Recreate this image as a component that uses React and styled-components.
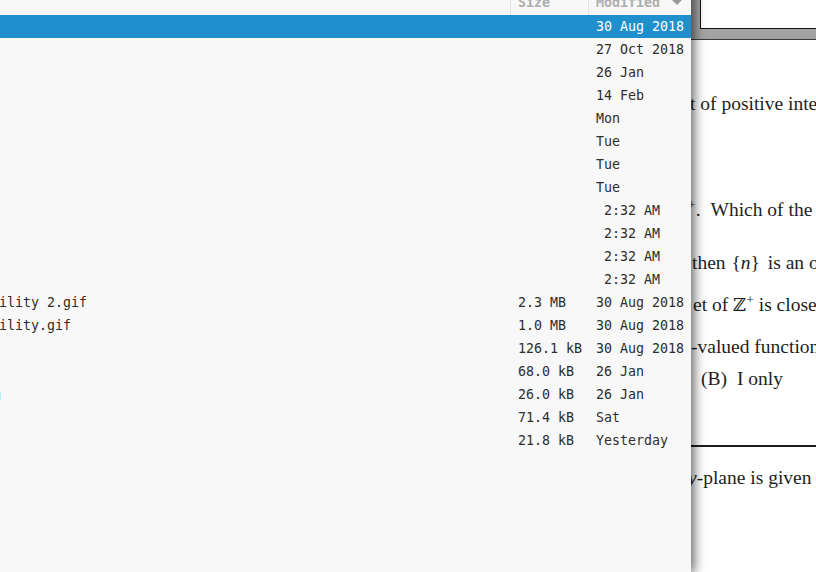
import React from 'react'
import styled, { createGlobalStyle } from 'styled-components'

const GlobalStyle = createGlobalStyle`
  *, *::before, *::after { box-sizing:border-box; }
  html, body { margin:0; padding:0; background:#fff; }
  body { width:816px; height:572px; overflow:hidden; }
`

const Screen = styled.div`
  position:relative;
  width:816px;
  height:572px;
  overflow:hidden;
  background:#fff;
`

/* pdf viewer behind the file window */
const Viewer = styled.div`
  display:flex;
  flex-direction:column;
  height:100%;
`

const TopBand = styled.div`
  flex-shrink:0;
  height:40px;
  padding-left:700px;
  background:#a3a3a3;
  border-bottom:1px solid #3a3a3a;
`

const PrevPage = styled.div`
  height:29px;
  background:#fff;
  border-left:1px solid #111;
  border-bottom:1px solid #111;
`

const Page = styled.div`
  flex:1;
  background:#fff;
  color:#1e1e1e;
  font-family:"Liberation Serif","DejaVu Serif",serif;
  font-size:19.5px;
`

const Line = styled.div`
  margin-top:${({$gap})=>$gap}px;
  padding-left:${({$x})=>$x}px;
  height:26px;
  line-height:26px;
  white-space:nowrap;
`

const Sup = styled.span`
  font-size:13.5px;
  line-height:0;
  vertical-align:7px;
`

const Spaced = styled.span`
  margin-left:${({$gap})=>$gap}px;
`

const Double = styled.span`
  font-family:"DejaVu Serif",serif;
  font-size:18px;
`

const Rule = styled.div`
  margin-top:${({$gap})=>$gap}px;
  margin-left:300px;
  height:2px;
  background:#1c1c1c;
`

/* file manager window */
const FileWindow = styled.div`
  position:absolute;
  top:-14px;
  left:-200px;
  width:891px;
  height:586px;
  background:#f8f8f8;
  box-shadow:2px 0 11px 1px rgba(0,0,0,0.62);
  font-family:"DejaVu Sans Mono","Liberation Mono",monospace;
  font-size:13.3px;
  color:#2e2e2e;
`

const Header = styled.div`
  display:grid;
  grid-template-columns:710px 78px 103px;
  height:29px;
`

const HeadCell = styled.div`
  display:flex;
  align-items:center;
  justify-content:space-between;
  padding:4px 9px 0 ${({$sep})=>$sep ? 7 : 135}px;
  line-height:25px;
  font-weight:bold;
  color:#adadad;
  border-left:${({$sep})=>$sep ? '1px solid #e4e4e4' : 'none'};
`

const SortArrow = styled.span`
  width:0;
  height:0;
  border-left:5px solid transparent;
  border-right:5px solid transparent;
  border-top:5px solid #9a9a9a;
`

const Row = styled.div`
  display:grid;
  grid-template-columns:710px 78px 103px;
  height:23px;
  line-height:23px;
  background:${({$selected})=>$selected ? '#1f8fcd' : 'transparent'};
  color:${({$selected})=>$selected ? '#fff' : '#2e2e2e'};
`

const NameCell = styled.div`
  display:flex;
  align-items:center;
  gap:8px;
  padding-left:${({$indent})=>111 + $indent}px;
  white-space:pre;
  overflow:hidden;
`

const Cell = styled.div`
  padding-left:8px;
  white-space:pre;
  overflow:hidden;
`

const FileIcon = ({kind}) => {
  if (kind === 'folder') {
    return (
      <svg width="16" height="16" viewBox="0 0 16 16">
        <path d="M1 3h5l1.5 1.5H15V13H1z" fill="#7a9cc6"/>
      </svg>
    )
  }
  if (kind === 'sheet') {
    return (
      <svg width="16" height="16" viewBox="0 0 16 16">
        <rect x="3" y="5" width="13" height="8" fill="#aef2f2"/>
      </svg>
    )
  }
  return (
    <svg width="16" height="16" viewBox="0 0 16 16">
      <path d="M3 1h7l3 3v11H3z" fill="#dcdcdc"/>
    </svg>
  )
}

const files = [
  { name:'Desktop', size:'', modified:'30 Aug 2018', kind:'folder', selected:true },
  { name:'Music', size:'', modified:'27 Oct 2018', kind:'folder' },
  { name:'Videos', size:'', modified:'26 Jan', kind:'folder' },
  { name:'Public', size:'', modified:'14 Feb', kind:'folder' },
  { name:'Photos', size:'', modified:'Mon', kind:'folder' },
  { name:'Notes', size:'', modified:'Tue', kind:'folder' },
  { name:'Books', size:'', modified:'Tue', kind:'folder' },
  { name:'Games', size:'', modified:'Tue', kind:'folder' },
  { name:'Code', size:'', modified:' 2:32 AM', kind:'folder' },
  { name:'Backup', size:'', modified:' 2:32 AM', kind:'folder' },
  { name:'Mail', size:'', modified:' 2:32 AM', kind:'folder' },
  { name:'Scans', size:'', modified:' 2:32 AM', kind:'folder' },
  { name:'Accessibility 2.gif', size:'2.3 MB', modified:'30 Aug 2018', kind:'file' },
  { name:'Accessibility.gif', size:'1.0 MB', modified:'30 Aug 2018', kind:'file' },
  { name:'cv.pdf', size:'126.1 kB', modified:'30 Aug 2018', kind:'file' },
  { name:'map.png', size:'68.0 kB', modified:'26 Jan', kind:'file' },
  { name:'', size:'26.0 kB', modified:'26 Jan', kind:'sheet', indent:74 },
  { name:'doc.odt', size:'71.4 kB', modified:'Sat', kind:'file' },
  { name:'todo.md', size:'21.8 kB', modified:'Yesterday', kind:'file' },
]

const App = () => {
  return (
    <Screen>
      <GlobalStyle/>
      <Viewer>
        <TopBand>
          <PrevPage/>
        </TopBand>
        <Page>
          <Line $gap={51} $x={690}>t of positive integers.</Line>
          <Line $gap={80} $x={688}>
            <Sup>+</Sup>.<Spaced $gap={10}>Which of the following</Spaced>
          </Line>
          <Line $gap={27} $x={692}>
            then <Spaced $gap={1}>{'{'}<i>n</i>{'}'}</Spaced> <Spaced $gap={3}>is an open set</Spaced>
          </Line>
          <Line $gap={16} $x={693}>
            et of <Double>ℤ</Double><Sup>+</Sup> is closed
          </Line>
          <Line $gap={16} $x={691}>-valued function</Line>
          <Line $gap={6} $x={701}>
            (B)<Spaced $gap={10}>I only</Spaced>
          </Line>
          <Rule $gap={53}/>
          <Line $gap={18} $x={688}>
            <i>y</i>-plane is given by
          </Line>
        </Page>
      </Viewer>

      <FileWindow>
        <Header>
          <HeadCell>Name</HeadCell>
          <HeadCell $sep>Size</HeadCell>
          <HeadCell $sep>Modified<SortArrow/></HeadCell>
        </Header>
        {files.map((f, i) => (
          <Row key={i} $selected={f.selected}>
            <NameCell $indent={f.indent || 0}>
              <FileIcon kind={f.kind}/>
              {f.name}
            </NameCell>
            <Cell>{f.size}</Cell>
            <Cell>{f.modified}</Cell>
          </Row>
        ))}
      </FileWindow>
    </Screen>
  )
}

export default App
